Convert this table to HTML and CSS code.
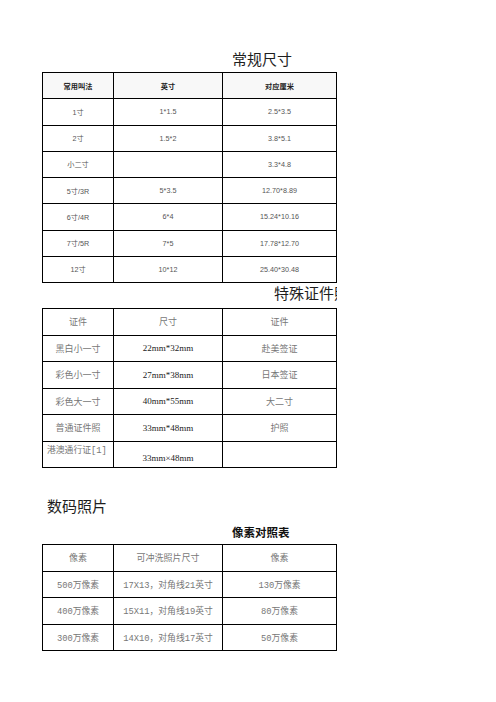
FILE: index.html
```html
<!DOCTYPE html>
<html lang="zh-CN">
<head>
<meta charset="utf-8">
<title>照片尺寸</title>
<link rel="stylesheet" href="styles.css">
</head>
<body>
<div class="page">
  <h2 class="title title-1">常规尺寸</h2>
  <div class="grid grid-std">
    <div class="cell head">常用叫法</div><div class="cell head">英寸</div><div class="cell head">对应厘米</div>
    <div class="cell">1寸</div><div class="cell">1*1.5</div><div class="cell">2.5*3.5</div>
    <div class="cell">2寸</div><div class="cell">1.5*2</div><div class="cell">3.8*5.1</div>
    <div class="cell">小二寸</div><div class="cell"></div><div class="cell">3.3*4.8</div>
    <div class="cell">5寸/3R</div><div class="cell">5*3.5</div><div class="cell">12.70*8.89</div>
    <div class="cell">6寸/4R</div><div class="cell">6*4</div><div class="cell">15.24*10.16</div>
    <div class="cell">7寸/5R</div><div class="cell">7*5</div><div class="cell">17.78*12.70</div>
    <div class="cell">12寸</div><div class="cell">10*12</div><div class="cell">25.40*30.48</div>
  </div>

  <h2 class="title title-2">特殊证件照</h2>
  <div class="grid grid-id">
    <div class="cell">证件</div><div class="cell">尺寸</div><div class="cell">证件</div>
    <div class="cell">黑白小一寸</div><div class="cell mm">22mm*32mm</div><div class="cell">赴美签证</div>
    <div class="cell">彩色小一寸</div><div class="cell mm">27mm*38mm</div><div class="cell">日本签证</div>
    <div class="cell">彩色大一寸</div><div class="cell mm">40mm*55mm</div><div class="cell">大二寸</div>
    <div class="cell">普通证件照</div><div class="cell mm">33mm*48mm</div><div class="cell">护照</div>
    <div class="cell top mono">港澳通行证[1]</div><div class="cell mm low">33mm×48mm</div><div class="cell"></div>
  </div>

  <h2 class="title title-3">数码照片</h2>
  <h3 class="subtitle">像素对照表</h3>
  <div class="grid grid-px">
    <div class="cell">像素</div><div class="cell">可冲洗照片尺寸</div><div class="cell">像素</div>
    <div class="cell mono">500万像素</div><div class="cell mono">17X13，对角线21英寸</div><div class="cell mono">130万像素</div>
    <div class="cell mono">400万像素</div><div class="cell mono">15X11，对角线19英寸</div><div class="cell mono">80万像素</div>
    <div class="cell mono">300万像素</div><div class="cell mono">14X10，对角线17英寸</div><div class="cell mono">50万像素</div>
  </div>
</div>
</body>
</html>
```
FILE: styles.css
```css
html, body {
  margin: 0;
  padding: 0;
  background: #fff;
}

.page {
  padding-left: 42px;
  font-family: "Noto Sans CJK SC", sans-serif;
  color: #222;
}

.title {
  margin: 0;
  font-size: 15px;
  line-height: 18px;
  font-weight: normal;
  color: #1e1e1e;
  white-space: nowrap;
}

.title-1 {
  padding-top: 50px;
  padding-left: 190px;
  margin-bottom: 4px;
}

.title-2 {
  width: 295px;
  overflow: hidden;
  box-sizing: border-box;
  padding-left: 232px;
  margin-top: 1px;
  margin-bottom: 6px;
}

.title-3 {
  padding-left: 5px;
  margin-top: 29px;
}

.subtitle {
  margin: 10px 0 5px;
  padding-left: 190px;
  font-size: 11.5px;
  line-height: 14px;
  font-weight: bold;
  color: #111;
}

.grid {
  display: grid;
  grid-template-columns: 70px 108px 113px;
  gap: 1px;
  width: fit-content;
  background: #000;
  border: 1px solid #000;
}

.grid-std {
  grid-auto-rows: 25.25px;
  font-family: "Liberation Sans", "Noto Sans CJK SC", sans-serif;
  font-size: 7.2px;
  color: #555;
}

.grid-id,
.grid-px {
  grid-auto-rows: 25.5px;
  font-family: "Liberation Serif", "Noto Sans CJK SC", serif;
  font-size: 9px;
  color: #777;
}

.cell {
  background: #fff;
  display: flex;
  align-items: center;
  justify-content: center;
  white-space: nowrap;
  overflow: hidden;
}

.head {
  background: #f8f8f8;
  font-weight: bold;
  color: #222;
}

.mm {
  color: #1a1a1a;
  font-size: 9px;
}

.mono {
  font-family: "Liberation Mono", "Noto Sans CJK SC", monospace;
  font-size: 8.8px;
  color: #777;
}

.top {
  align-items: flex-start;
  justify-content: flex-start;
  padding: 1px 0 0 4px;
}

.low {
  padding-top: 8px;
}
```
